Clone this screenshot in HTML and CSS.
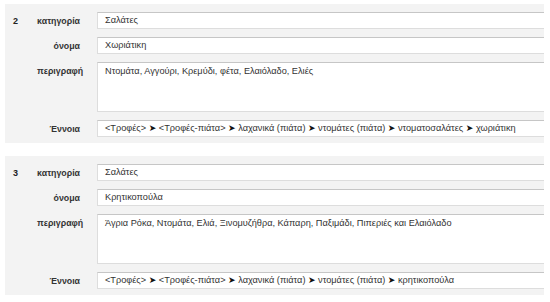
FILE: index.html
```html
<!DOCTYPE html>
<html lang="el">
<head>
  <meta charset="UTF-8" />
  <meta name="viewport" content="width=device-width, initial-scale=1.0"/>
  <title>Συνταγές</title>
  <link rel="stylesheet" href="styles.css">
</head>
<body>
  <div class="entry">
    <span class="num">2</span>
    <label class="lbl">κατηγορία</label>
    <div class="field">Σαλάτες</div>

    <label class="lbl">όνομα</label>
    <div class="field">Χωριάτικη</div>

    <label class="lbl top">περιγραφή</label>
    <div class="field area">Ντομάτα, Αγγούρι, Κρεμύδι, φέτα, Ελαιόλαδο, Ελιές</div>

    <label class="lbl">Έννοια</label>
    <div class="field">&lt;Τροφές&gt; <span class="arr">➤</span> &lt;Τροφές-πιάτα&gt; <span class="arr">➤</span> λαχανικά (πιάτα) <span class="arr">➤</span> ντομάτες (πιάτα) <span class="arr">➤</span> ντοματοσαλάτες <span class="arr">➤</span> χωριάτικη</div>
  </div>

  <div class="entry">
    <span class="num">3</span>
    <label class="lbl">κατηγορία</label>
    <div class="field">Σαλάτες</div>

    <label class="lbl">όνομα</label>
    <div class="field">Κρητικοπούλα</div>

    <label class="lbl top">περιγραφή</label>
    <div class="field area">Άγρια Ρόκα, Ντομάτα, Ελιά, Ξινομυζήθρα, Κάπαρη, Παξιμάδι, Πιπεριές και Ελαιόλαδο</div>

    <label class="lbl">Έννοια</label>
    <div class="field">&lt;Τροφές&gt; <span class="arr">➤</span> &lt;Τροφές-πιάτα&gt; <span class="arr">➤</span> λαχανικά (πιάτα) <span class="arr">➤</span> ντομάτες (πιάτα) <span class="arr">➤</span> κρητικοπούλα</div>
  </div>
</body>
</html>
```

FILE: styles.css
```css
body {
  font-family: "Liberation Sans", Arial, sans-serif;
  margin: 4px 6px 0 5px;
  background: #fff;
  color: #333;
}

.entry {
  display: grid;
  grid-template-columns: 24px 60px 1fr;
  row-gap: 8px;
  align-items: center;
  background: #f3f3f3;
  padding: 8px 0 6px 8px;
  margin-bottom: 13px;
}

.num {
  grid-column: 1;
  grid-row: 1;
  font-size: 9px;
  font-weight: bold;
  color: #222;
}

.lbl {
  grid-column: 2;
  text-align: right;
  padding-right: 17px;
  font-size: 8.8px;
  font-weight: bold;
  color: #333;
  white-space: nowrap;
}

.lbl.top {
  align-self: start;
  padding-top: 4px;
}

.field {
  grid-column: 3;
  height: 17px;
  box-sizing: border-box;
  background: #fff;
  border: 1px solid #ddd;
  border-top-color: #c6c6c6;
  border-right: none;
  padding: 0 7px;
  font-size: 9.2px;
  line-height: 15px;
  white-space: nowrap;
  overflow: hidden;
}

.field.area {
  height: 50px;
  padding-top: 1px;
  align-self: start;
}

.arr {
  font-family: "DejaVu Sans", sans-serif;
  font-size: 9px;
  color: #111;
}
```
